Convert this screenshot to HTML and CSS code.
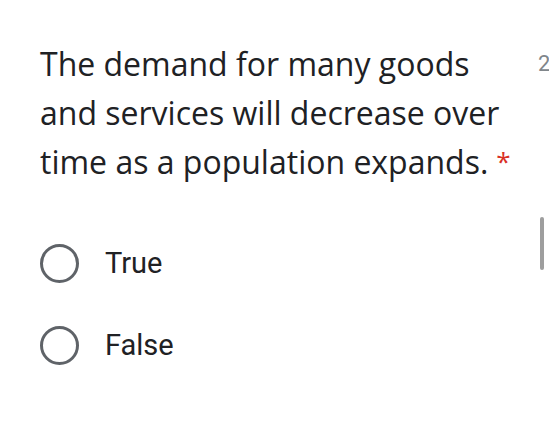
FILE: index.html
```html
<!DOCTYPE html>
<html>
<head>
<meta charset="utf-8">
<link rel="stylesheet" href="styles.css">
</head>
<body>
<div class="page">
  <div class="question">
    <div class="title">The demand for many goods<br>and services will decrease over<br>time as a population expands.<span class="req">*</span></div>
    <div class="points">2 points</div>
  </div>
  <div class="options">
    <label class="option"><span class="radio"></span><span class="label">True</span></label>
    <label class="option"><span class="radio"></span><span class="label">False</span></label>
  </div>
</div>
<div class="scrollbar"></div>
</body>
</html>
```
FILE: styles.css
```css
html, body {
  margin: 0;
  padding: 0;
  background: #fff;
  overflow: hidden;
}
.page {
  width: 549px;
  height: 424px;
  overflow: hidden;
  padding: 39px 0 0 40px;
  box-sizing: border-box;
}
.question {
  display: flex;
  white-space: nowrap;
}
.title {
  width: 498px;
  flex: none;
  font-family: "Open Sans", sans-serif;
  font-size: 32px;
  line-height: 49px;
  color: #202124;
}
.req {
  color: #d93025;
  font-size: 26px;
  margin-left: 8px;
  vertical-align: 3px;
}
.points {
  font-family: Roboto, sans-serif;
  font-size: 22px;
  line-height: 49px;
  color: #80868b;
}
.options {
  display: flex;
  flex-direction: column;
  gap: 42px;
  margin-top: 57px;
}
.option {
  display: flex;
  align-items: center;
  gap: 26px;
}
.radio {
  width: 33px;
  height: 33px;
  border: 3.5px solid #5f6368;
  border-radius: 50%;
  flex: none;
}
.label {
  font-family: Roboto, sans-serif;
  font-size: 29px;
  color: #202124;
  line-height: 40px;
}
.scrollbar {
  position: absolute;
  left: 540px;
  top: 217px;
  width: 4px;
  height: 53px;
  background: #9e9e9e;
  border-radius: 2px;
}
```
